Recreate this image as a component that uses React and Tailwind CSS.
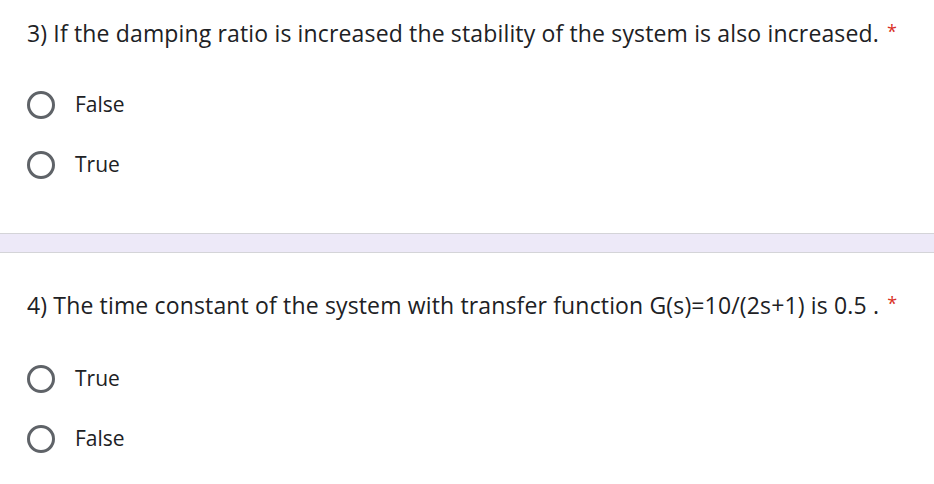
import React from 'react';

const font = { fontFamily: '"Open Sans", "Noto Sans", sans-serif' };

function Option({ label }) {
  return (
    <div className="flex items-center h-[60px]">
      <div className="w-[28px] h-[28px] rounded-full border-[3px] border-[#5f6368] ml-[27px]" />
      <span className="ml-[20px] text-[21px] text-[#202124]">{label}</span>
    </div>
  );
}

function Question({ title, options, gap }) {
  return (
    <div>
      <div className="pl-[27px] text-[23px] tracking-[0.15px] text-[#202124] leading-[30px] whitespace-nowrap">
        {title}
        <span className="text-[#d93025] text-[18px] align-top ml-[8px] relative top-[-2px]">*</span>
      </div>
      <div className={gap}>
        {options.map((o) => (
          <Option key={o} label={o} />
        ))}
      </div>
    </div>
  );
}

export default function App() {
  return (
    <div className="w-[934px] h-[484px] bg-white overflow-hidden" style={font}>
      <div className="pt-[18px] h-[233px]">
        <Question
          title="3) If the damping ratio is increased the stability of the system is also increased."
          options={['False', 'True']}
          gap="mt-[27px]"
        />
      </div>
      <div className="h-[20px] bg-[#ede9f8] border-t border-b border-[#d4d4d8]" />
      <div className="pt-[37px]">
        <Question
          title="4) The time constant of the system with transfer function G(s)=10/(2s+1) is 0.5 ."
          options={['True', 'False']}
          gap="mt-[29px]"
        />
      </div>
    </div>
  );
}
